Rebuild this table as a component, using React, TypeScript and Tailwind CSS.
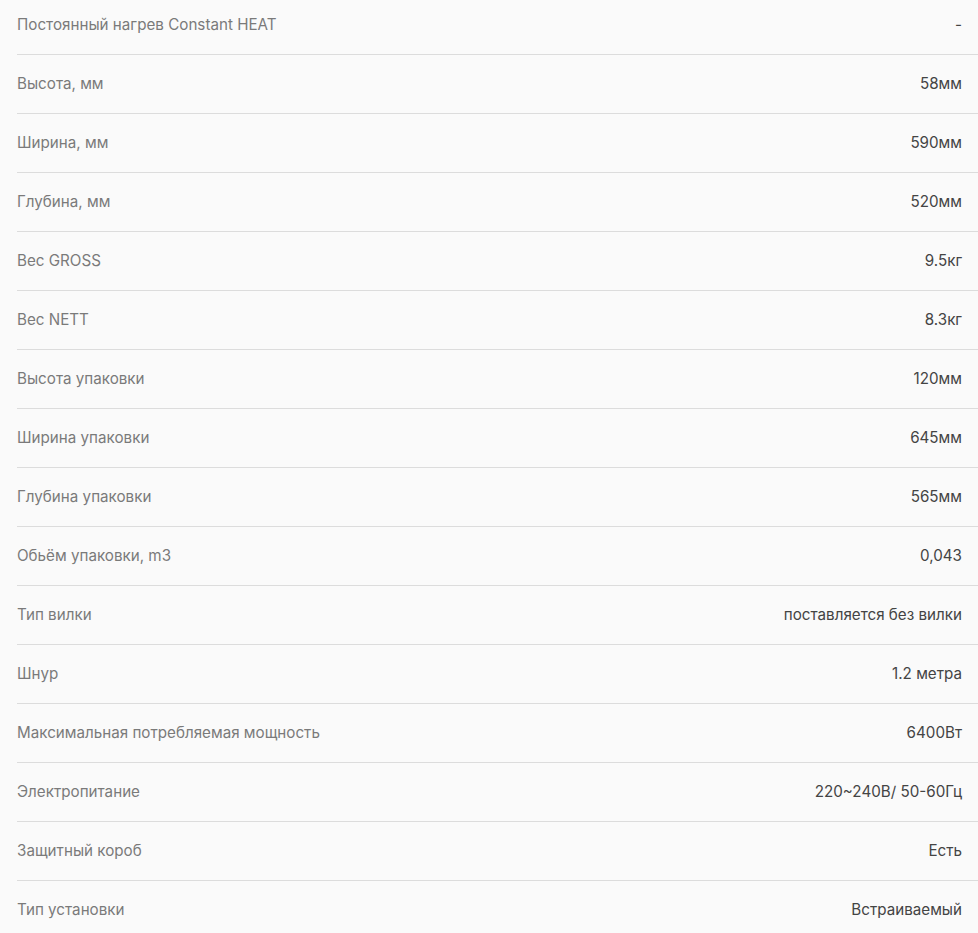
import React from "react";

const rows: [string, string][] = [
  ["Постоянный нагрев Constant HEAT", "-"],
  ["Высота, мм", "58мм"],
  ["Ширина, мм", "590мм"],
  ["Глубина, мм", "520мм"],
  ["Вес GROSS", "9.5кг"],
  ["Вес NETT", "8.3кг"],
  ["Высота упаковки", "120мм"],
  ["Ширина упаковки", "645мм"],
  ["Глубина упаковки", "565мм"],
  ["Обьём упаковки, m3", "0,043"],
  ["Тип вилки", "поставляется без вилки"],
  ["Шнур", "1.2 метра"],
  ["Максимальная потребляемая мощность", "6400Вт"],
  ["Электропитание", "220~240В/ 50-60Гц"],
  ["Защитный короб", "Есть"],
  ["Тип установки", "Встраиваемый"],
];

export default function App() {
  return (
    <div className="w-[978px] h-[933px] overflow-hidden bg-[#fafafa]" style={{ fontFamily: "Inter, 'Noto Sans', sans-serif" }}>
      <div className="ml-[17px] -mt-[4px]">
        {rows.map(([k, v], i) => (
          <div
            key={i}
            className={`flex items-center justify-between h-[59px] pr-[16px] text-[15.2px] ${i < rows.length - 1 ? "border-b border-[#dcdcdc]" : ""}`}
          >
            <span className="text-[#7a7a7a]">{k}</span>
            <span className="text-[#444444]">{v}</span>
          </div>
        ))}
      </div>
    </div>
  );
}
